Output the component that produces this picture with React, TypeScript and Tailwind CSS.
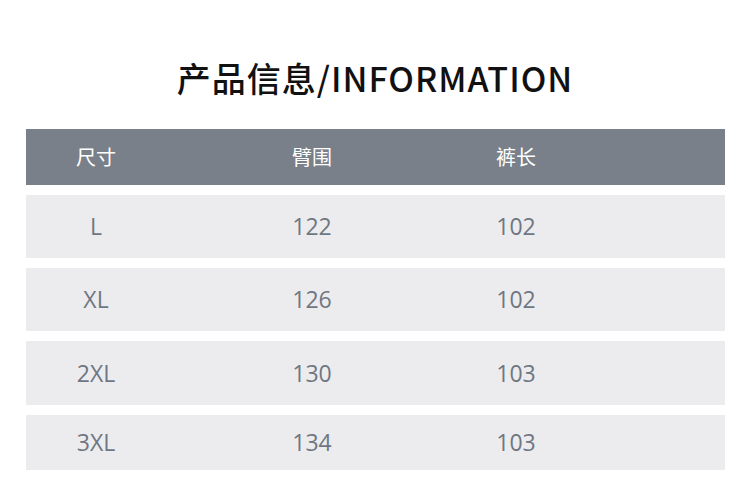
import React from 'react';

const rows = [
  { size: 'L', hip: '122', length: '102', h: 'h-[63px]' },
  { size: 'XL', hip: '126', length: '102', h: 'h-[63px]' },
  { size: '2XL', hip: '130', length: '103', h: 'h-[64px]' },
  { size: '3XL', hip: '134', length: '103', h: 'h-[55px]' },
];

const cjk = { fontFamily: '"Noto Sans CJK SC", "Noto Sans", sans-serif' };
const num = { fontFamily: '"Open Sans", "Noto Sans CJK SC", sans-serif' };

const App: React.FC = () => {
  return (
    <div className="w-[750px] h-[482px] bg-white overflow-hidden">
      <h1
        className="pt-[54px] h-[129px] text-center text-[34px] leading-[48px] font-medium text-[#111] tracking-[1px]"
        style={cjk}
      >
        产品信息/INFORMATION
      </h1>

      <div className="mx-[26px] w-[699px] flex flex-col gap-[10px]">
        {/* header bar */}
        <div className="h-[56px] flex items-center bg-[#79808a] text-white text-[20px]" style={cjk}>
          <div className="w-[140px] text-center">尺寸</div>
          <div className="w-[292px] text-center">臂围</div>
          <div className="w-[116px] text-center">裤长</div>
        </div>

        {rows.map((r) => (
          <div key={r.size} className={`${r.h} flex items-center bg-[#ececee] text-[#6f7783] text-[23px]`} style={num}>
            <div className="w-[140px] text-center">{r.size}</div>
            <div className="w-[292px] text-center">{r.hip}</div>
            <div className="w-[116px] text-center">{r.length}</div>
          </div>
        ))}
      </div>
    </div>
  );
};

export default App;
